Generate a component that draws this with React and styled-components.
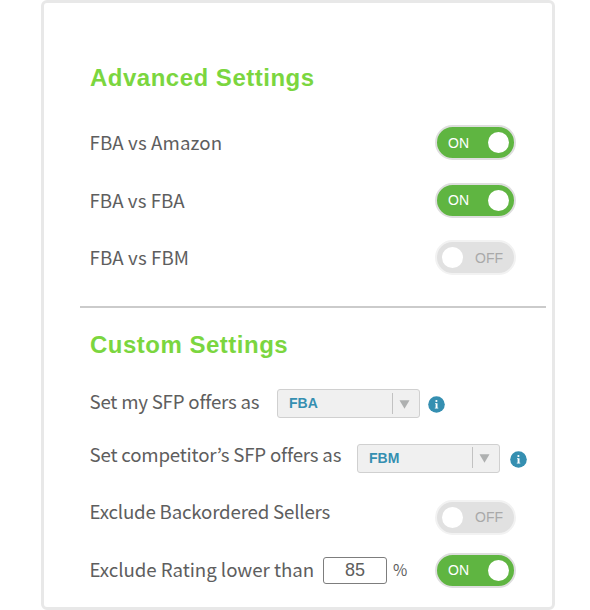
import { useState } from 'react';
import styled, { createGlobalStyle } from 'styled-components';

const GlobalStyle = createGlobalStyle`
  * {
    box-sizing: border-box;
  }

  body {
    margin: 0;
    background: #fff;
    overflow: hidden;
  }
`;

const Panel = styled.main`
  width: 514px;
  height: 610px;
  margin-left: 41px;
  padding: 61px 36px 0 46px;
  border: 3px solid #e8e8e8;
  border-radius: 6px;
  background: #fff;
`;

const Heading = styled.h2`
  margin: 0 0 ${props => props.$gap}px;
  font-family: 'Liberation Sans', Arial, sans-serif;
  font-size: 24px;
  font-weight: 700;
  line-height: 28px;
  letter-spacing: ${props => props.$tracking}px;
  color: #7bd63f;
`;

const Row = styled.div`
  display: flex;
  align-items: center;
  height: ${props => props.$height}px;
`;

const Label = styled.span`
  flex: none;
  width: ${props => (props.$width ? `${props.$width}px` : 'auto')};
  padding-bottom: ${props => props.$lift || 0}px;
  font-family: 'Noto Sans CJK KR', 'Noto Sans', sans-serif;
  font-size: 18.7px;
  line-height: 26px;
  letter-spacing: ${props => props.$tracking || 0}px;
  text-indent: -0.5px;
  white-space: nowrap;
  color: #5e5e5e;
`;

const Divider = styled.hr`
  height: 2px;
  margin: 20px -30px 23px -10px;
  border: 0;
  background: #cbcbcb;
`;

const Switch = styled.button`
  display: flex;
  flex-direction: ${props => (props.$on ? 'row' : 'row-reverse')};
  align-items: center;
  justify-content: space-between;
  width: 81px;
  height: 35px;
  margin-left: auto;
  padding: ${props => (props.$on ? '0 5px 0 11px' : '0 11px 0 5px')};
  border: 2px solid ${props => (props.$on ? '#dedede' : '#f2f2f2')};
  border-radius: 18px;
  background: ${props => (props.$on ? '#5fb541' : '#e1e1e1')};
  font-family: 'Liberation Sans', Arial, sans-serif;
  font-size: 14px;
  color: ${props => (props.$on ? '#fff' : '#a9a9a9')};
`;

const Knob = styled.span`
  width: 21px;
  height: 21px;
  border-radius: 50%;
  background: #fff;
`;

const SelectBox = styled.div`
  display: flex;
  flex: none;
  align-items: center;
  width: 143px;
  height: 29px;
  padding-left: 11px;
  border: 1px solid #d0d0d0;
  border-radius: 3px;
  background: #f0f0f0;
  font-family: 'Liberation Sans', Arial, sans-serif;
  font-size: 14px;
  font-weight: 700;
  line-height: 16px;
  padding-bottom: 1px;
  color: #358fb1;
`;

const SelectArrow = styled.span`
  display: flex;
  align-items: center;
  justify-content: center;
  width: 27px;
  height: 21px;
  margin-left: auto;
  padding: 2px 3px 0 0;
  border-left: 1px solid #c2c2c2;
`;

const InfoBadge = styled.span`
  display: flex;
  flex: none;
  margin: 2px -10px 0 ${props => props.$gap}px;
`;

const RatingInput = styled.input`
  width: 64px;
  height: 27px;
  padding: 0;
  border: 1px solid #7d7d7d;
  border-radius: 3px;
  background: #fff;
  font-family: 'Liberation Sans', Arial, sans-serif;
  font-size: 18px;
  text-align: center;
  color: #5e5e5e;
`;

const Percent = styled.span`
  margin-left: 6px;
  padding-bottom: 3px;
  font-family: 'Noto Sans CJK KR', 'Noto Sans', sans-serif;
  font-size: 15.5px;
  line-height: 20px;
  color: #5e5e5e;
`;

const Toggle = ({ initial }) => {
  const [on, setOn] = useState(initial);

  return (
    <Switch $on={on} onClick={() => setOn(!on)}>
      {on ? 'ON' : 'OFF'}
      <Knob />
    </Switch>
  );
};

const Select = ({ value }) => (
  <SelectBox>
    {value}
    <SelectArrow>
      <svg width="11" height="9" viewBox="0 0 11 9">
        <path d="M0.5 0.3h10L5.5 8.8z" fill="#aeb0b0" />
      </svg>
    </SelectArrow>
  </SelectBox>
);

const Info = ({ gap }) => (
  <InfoBadge $gap={gap}>
    <svg width="17" height="17" viewBox="0 0 17 17">
      <circle cx="8.5" cy="8.5" r="8.3" fill="#358fb1" />
      <circle cx="8.4" cy="5" r="1.1" fill="#fff" />
      <path d="M7 7.2h2.5v4.6h.8v.8H6.8v-.8h.8V8H7z" fill="#fff" />
    </svg>
  </InfoBadge>
);

const App = () => {
  const [rating, setRating] = useState('85');

  return (
    <>
      <GlobalStyle />
      <Panel>
        <Heading $gap={22} $tracking={0.5}>Advanced Settings</Heading>
        <Row $height={57}>
          <Label $lift={2} $tracking={0.1}>FBA vs Amazon</Label>
          <Toggle initial={true} />
        </Row>
        <Row $height={58}>
          <Label $tracking={0.05}>FBA vs FBA</Label>
          <Toggle initial={true} />
        </Row>
        <Row $height={57}>
          <Label $lift={2} $tracking={0.1}>FBA vs FBM</Label>
          <Toggle initial={false} />
        </Row>

        <Divider />

        <Heading $gap={18} $tracking={0.5}>Custom Settings</Heading>
        <Row $height={53}>
          <Label $lift={5} $width={187} $tracking={-0.22}>Set my SFP offers as</Label>
          <Select value="FBA" />
          <Info gap={8} />
        </Row>
        <Row $height={56}>
          <Label $lift={9} $width={267} $tracking={-0.19}>Set competitor’s SFP offers as</Label>
          <Select value="FBM" />
          <Info gap={10} />
        </Row>
        <Row $height={62}>
          <Label $lift={13} $tracking={-0.19}>Exclude Backordered Sellers</Label>
          <Toggle initial={false} />
        </Row>
        <Row $height={44}>
          <Label $lift={2} $width={233} $tracking={-0.04}>Exclude Rating lower than</Label>
          <RatingInput value={rating} onChange={e => setRating(e.target.value)} />
          <Percent>%</Percent>
          <Toggle initial={true} />
        </Row>
      </Panel>
    </>
  );
};

export default App;
